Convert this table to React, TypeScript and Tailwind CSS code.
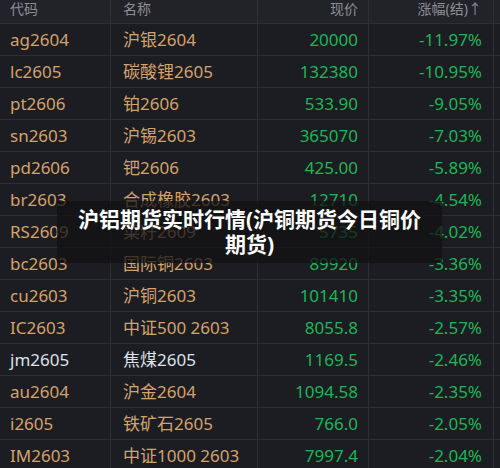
const rows = [
  { code: "ag2604", name: "沪银2604", price: "20000", pct: "-11.97%" },
  { code: "lc2605", name: "碳酸锂2605", price: "132380", pct: "-10.95%" },
  { code: "pt2606", name: "铂2606", price: "533.90", pct: "-9.05%" },
  { code: "sn2603", name: "沪锡2603", price: "365070", pct: "-7.03%" },
  { code: "pd2606", name: "钯2606", price: "425.00", pct: "-5.89%" },
  { code: "br2603", name: "合成橡胶2603", price: "12710", pct: "-4.54%" },
  { code: "RS2609", name: "菜籽2609", price: "5735", pct: "-4.02%" },
  { code: "bc2603", name: "国际铜2603", price: "89920", pct: "-3.36%" },
  { code: "cu2603", name: "沪铜2603", price: "101410", pct: "-3.35%" },
  { code: "IC2603", name: "中证500 2603", price: "8055.8", pct: "-2.57%" },
  { code: "jm2605", name: "焦煤2605", price: "1169.5", pct: "-2.46%", light: true },
  { code: "au2604", name: "沪金2604", price: "1094.58", pct: "-2.35%" },
  { code: "i2605", name: "铁矿石2605", price: "766.0", pct: "-2.05%" },
  { code: "IM2603", name: "中证1000 2603", price: "7997.4", pct: "-2.04%" },
];

const cols = "grid grid-cols-[111px_147px_111px_125px_6px]";

export default function App() {
  return (
    <div
      className="relative w-[500px] h-[468px] overflow-hidden bg-[#1c1d22]"
      style={{ fontFamily: '"Noto Sans", "Noto Sans CJK SC", sans-serif' }}
    >
      <div className={`${cols} h-6 bg-[#222329] border-b border-[#2e2f35] text-[14px] leading-none text-[#8c8e95]`}>
        <div className="pl-[10px] pt-[2px] border-r border-[#2e2f35]">代码</div>
        <div className="pl-[12px] pt-[2px] border-r border-[#2e2f35]">名称</div>
        <div className="pr-[10px] pt-[2px] text-right border-r border-[#2e2f35]">现价</div>
        <div className="pr-[11px] pt-[2px] text-right border-r border-[#2e2f35]">涨幅(结)↑</div>
        <div />
      </div>
      {rows.map((r) => (
        <div
          key={r.code}
          className={`${cols} h-8 border-b border-[#2e2f35] text-[17px] leading-none items-stretch`}
        >
          <div
            className={`flex items-center pl-[10px] border-r border-[#2e2f35] ${r.light ? "text-[#dde0e8]" : "text-[#d4a26b]"}`}
          >
            {r.code}
          </div>
          <div
            className={`flex items-center pl-[12px] border-r border-[#2e2f35] ${r.light ? "text-[#dde0e8]" : "text-[#d4a26b]"}`}
          >
            {r.name}
          </div>
          <div className="flex items-center justify-end pr-[10px] border-r border-[#2e2f35] text-[#1fb556]">
            {r.price}
          </div>
          <div className="flex items-center justify-end pr-[11px] border-r border-[#2e2f35] text-[#1fb556]">
            {r.pct}
          </div>
          <div />
        </div>
      ))}
      <div className="absolute left-[57px] top-[201px] w-[385px] h-[62px] bg-[#111114]/75 flex items-center justify-center px-[16px]">
        <p className="text-center text-white font-bold text-[21px] leading-[25px]">
          沪铝期货实时行情(沪铜期货今日铜价期货)
        </p>
      </div>
    </div>
  );
}
